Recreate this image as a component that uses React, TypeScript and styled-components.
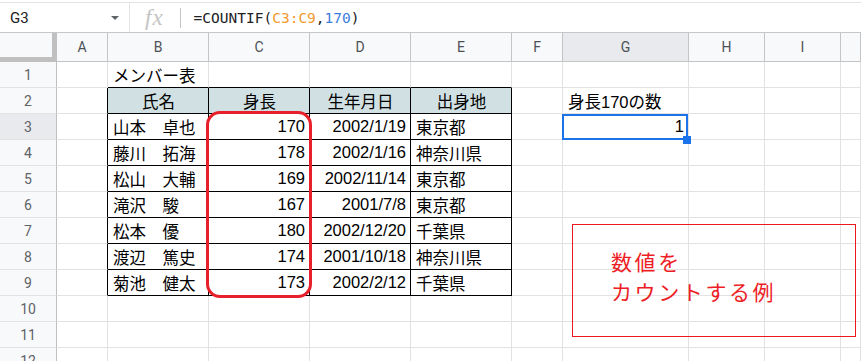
import styled, { createGlobalStyle } from "styled-components";

const GlobalStyle = createGlobalStyle`
  body {
    margin: 0;
    background: #fff;
  }
`;

const COLS = ["A", "B", "C", "D", "E", "F", "G", "H", "I", ""];
const WIDTHS = [57, 51, 101, 101, 101, 101, 51, 126, 76, 76, 20];
const ROW_COUNT = 12;

type Align = "left" | "right" | "center";
type CellData = { text: string; align?: Align };

const members = [
  ["山本　卓也", "170", "2002/1/19", "東京都"],
  ["藤川　拓海", "178", "2002/1/16", "神奈川県"],
  ["松山　大輔", "169", "2002/11/14", "東京都"],
  ["滝沢　駿", "167", "2001/7/8", "東京都"],
  ["松本　優", "180", "2002/12/20", "千葉県"],
  ["渡辺　篤史", "174", "2001/10/18", "神奈川県"],
  ["菊池　健太", "173", "2002/2/12", "千葉県"],
];

// sheet contents keyed by "row:col" (col 0 = A)
const cells: Record<string, CellData> = {
  "1:1": { text: "メンバー表" },
  "2:1": { text: "氏名", align: "center" },
  "2:2": { text: "身長", align: "center" },
  "2:3": { text: "生年月日", align: "center" },
  "2:4": { text: "出身地", align: "center" },
  "2:6": { text: "身長170の数" },
  "3:6": { text: "1", align: "right" },
};
members.forEach((m, i) => {
  const r = i + 3;
  cells[`${r}:1`] = { text: m[0] };
  cells[`${r}:2`] = { text: m[1], align: "right" };
  cells[`${r}:3`] = { text: m[2], align: "right" };
  cells[`${r}:4`] = { text: m[3] };
});

const inTable = (r: number, c: number) => r >= 2 && r <= 9 && c >= 1 && c <= 4;

const Page = styled.div`
  position: relative;
  width: 861px;
  height: 361px;
  overflow: hidden;
  font-family: Roboto, "Liberation Sans", sans-serif;
`;

const FormulaBar = styled.div`
  display: flex;
  align-items: center;
  margin-top: 2px;
  height: 29px;
  border-top: 1px solid #e3e3e3;
  border-bottom: 1px solid #c7c7c7;
`;

const NameBox = styled.div`
  display: flex;
  align-items: center;
  justify-content: space-between;
  box-sizing: border-box;
  width: 130px;
  height: 100%;
  padding: 0 10px 0 10px;
  border-right: 1px solid #e3e3e3;
  font-size: 15px;
  color: #202124;
`;

const Caret = styled.span`
  width: 0;
  height: 0;
  border-left: 4px solid transparent;
  border-right: 4px solid transparent;
  border-top: 4px solid #5f6368;
`;

const Fx = styled.span`
  margin-left: 15px;
  font-family: "Liberation Serif", serif;
  font-style: italic;
  font-size: 23px;
  color: #c4c4c4;
  letter-spacing: 1px;
`;

const Divider = styled.span`
  width: 1px;
  height: 20px;
  margin-left: 16px;
  background: #c4c4c4;
`;

const Formula = styled.span`
  margin-left: 13px;
  font-family: "DejaVu Sans Mono", "Liberation Mono", monospace;
  font-size: 14.5px;
  color: #202124;
`;

const Ref = styled.span`
  color: #f29a2e;
`;

const Num = styled.span`
  color: #3d7ddb;
`;

const Grid = styled.div`
  display: grid;
  grid-template-columns: ${WIDTHS.map((w) => `${w}px`).join(" ")};
  grid-template-rows: 29px repeat(${ROW_COUNT}, 26px);
`;

const Corner = styled.div`
  background: #f8f9fa;
  border-right: 5px solid #c0c0c0;
  border-bottom: 5px solid #c0c0c0;
`;

const ColHead = styled.div<{ $active?: boolean }>`
  display: flex;
  align-items: center;
  justify-content: center;
  background: ${(p) => (p.$active ? "#e8eaed" : "#f8f9fa")};
  border-right: 1px solid #c4c4c4;
  border-bottom: 1px solid #c4c4c4;
  font-size: 14px;
  color: #4d5156;
`;

const RowHead = styled.div<{ $active?: boolean }>`
  display: flex;
  align-items: center;
  justify-content: center;
  background: ${(p) => (p.$active ? "#e8eaed" : "#f8f9fa")};
  border-right: 1px solid #c0c0c0;
  border-bottom: 1px solid #e2e2e2;
  font-size: 14px;
  color: #5f6368;
`;

const Cell = styled.div<{
  $align: Align;
  $header?: boolean;
  $darkRight?: boolean;
  $darkBottom?: boolean;
  $selected?: boolean;
}>`
  position: relative;
  z-index: ${(p) => (p.$selected ? 2 : "auto")};
  display: flex;
  align-items: center;
  justify-content: ${(p) =>
    p.$align === "right" ? "flex-end" : p.$align === "center" ? "center" : "flex-start"};
  padding: 0 4px 0 5px;
  background: ${(p) => (p.$header ? "#d0e0e3" : "#fff")};
  border-right: 1px solid ${(p) => (p.$darkRight ? "#000" : "#e2e2e2")};
  border-bottom: 1px solid ${(p) => (p.$darkBottom ? "#000" : "#e2e2e2")};
  font-family: "Liberation Sans", "Noto Sans CJK JP", sans-serif;
  font-size: 16.5px;
  color: #000;
  white-space: nowrap;
`;

const Selection = styled.div`
  position: absolute;
  left: -1px;
  top: 0;
  right: 0;
  bottom: -1px;
  border: 2px solid #1a73e8;
  pointer-events: none;
`;

const FillHandle = styled.div`
  position: absolute;
  right: -5px;
  bottom: -6px;
  width: 8px;
  height: 8px;
  background: #1a73e8;
`;

const Highlight = styled.div`
  position: absolute;
  left: 206px;
  top: 111px;
  width: 106px;
  height: 187px;
  box-sizing: border-box;
  border: 3px solid #e8202b;
  border-radius: 14px;
`;

const Note = styled.div`
  position: absolute;
  left: 572px;
  top: 224px;
  width: 284px;
  height: 113px;
  box-sizing: border-box;
  padding: 21px 0 0 38px;
  border: 1px solid #f0161e;
  font-family: "Noto Sans CJK JP", sans-serif;
  font-size: 21px;
  line-height: 30px;
  letter-spacing: 2.6px;
  color: #ee1d25;
`;

export default function App() {
  const rows = Array.from({ length: ROW_COUNT }, (_, i) => i + 1);
  return (
    <Page>
      <GlobalStyle />
      <FormulaBar>
        <NameBox>
          G3
          <Caret />
        </NameBox>
        <Fx>fx</Fx>
        <Divider />
        <Formula>
          =COUNTIF(<Ref>C3:C9</Ref>,<Num>170</Num>)
        </Formula>
      </FormulaBar>
      <Grid>
        <Corner />
        {COLS.map((c, i) => (
          <ColHead key={i} $active={c === "G"}>
            {c}
          </ColHead>
        ))}
        {rows.map((r) => (
          <Row key={r} r={r} />
        ))}
      </Grid>
      <Highlight />
      <Note>
        数値を
        <br />
        カウントする例
      </Note>
    </Page>
  );
}

function Row({ r }: { r: number }) {
  return (
    <>
      <RowHead $active={r === 3}>{r}</RowHead>
      {COLS.map((_, c) => {
        const data = cells[`${r}:${c}`];
        const selected = r === 3 && c === 6;
        return (
          <Cell
            key={c}
            $align={data?.align ?? "left"}
            $header={r === 2 && inTable(r, c)}
            $darkRight={inTable(r, c) || inTable(r, c + 1)}
            $darkBottom={inTable(r, c) || inTable(r + 1, c)}
            $selected={selected}
          >
            {data?.text}
            {selected && (
              <Selection>
                <FillHandle />
              </Selection>
            )}
          </Cell>
        );
      })}
    </>
  );
}
